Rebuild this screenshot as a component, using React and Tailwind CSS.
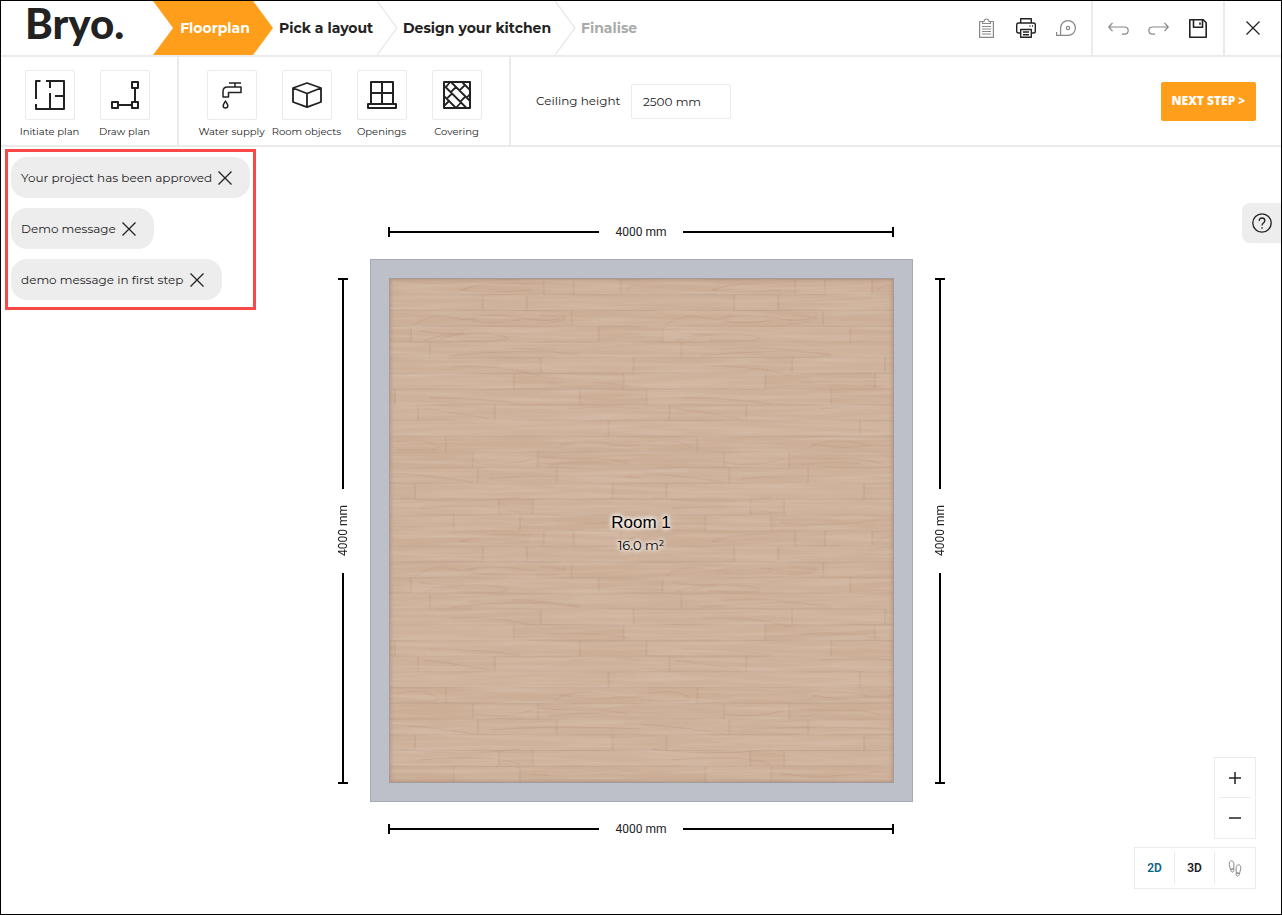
import clsx from 'clsx'

const steps = [
  { label: 'Pick a layout', width: 'w-[125px] pl-[6px]' },
  { label: 'Design your kitchen', width: 'w-[178px] pl-[5px]' },
]

const messages = [
  'Your project has been approved',
  'Demo message',
  'demo message in first step',
]

// x positions of the plank joints, one list per row of the floor pattern
const planks = [
  [154, 184, 231],
  [93, 137],
  [182],
  [21, 209],
  [40],
  [151, 244],
  [124, 234],
  [5, 190],
  [28, 105],
  [219],
  [56],
  [83, 148],
  [88, 167],
  [25, 223],
  [109, 143],
  [64, 130],
]

const TILE = 252
const ROW = TILE / planks.length
const tones = ['#cdb099', '#cfb29c', '#ccae97', '#ceb19b']

function Icon({ w, h, stroke = 1.5, className, children }) {
  return (
    <svg
      width={w}
      height={h}
      viewBox={`0 0 ${w} ${h}`}
      fill="none"
      stroke="currentColor"
      strokeWidth={stroke}
      strokeLinejoin="round"
      className={clsx('shrink-0', className)}
      aria-hidden="true"
    >
      {children}
    </svg>
  )
}

const InitiateIcon = () => (
  <Icon w={30} h={30} stroke={2}>
    <path d="M5.500 1H1v18M1 24v5h28V1H11M15 1v7M15 13v16M20 16h9" />
  </Icon>
)

const DrawIcon = () => (
  <Icon w={28} h={28} stroke={2}>
    <path d="M21 1h6v6h-6zM21 21h6v6h-6zM1 21h6v6H1zM24 7v14M7 24h14" />
  </Icon>
)

const WaterIcon = () => (
  <Icon w={20} h={27}>
    <path d="M7 1h12M13 1v4M1 15V9.500Q1 5 5.500 5H19v5.500H6.500V15z" />
    <path d="M3.500 19C2.500 21 1.200 22.300 1.200 23.700a2.300 2.300 0 0 0 4.600 0C5.800 22.300 4.500 21 3.500 19z" />
  </Icon>
)

const CubeIcon = () => (
  <Icon w={30} h={26} stroke={1.8}>
    <path d="M15 1l14 5v14l-14 5.200L1 20V6zM1 6l14 5.500L29 6M15 11.500v13.700" />
  </Icon>
)

const WindowIcon = () => (
  <Icon w={30} h={28} stroke={2}>
    <path d="M4 23V1h22v22M15 1v22M4 12h22M1 23h28v4H1z" />
  </Icon>
)

const CoveringIcon = () => (
  <Icon w={28} h={28} stroke={2}>
    <path d="M1 1h26v26H1z" />
    <path
      strokeWidth="1.800"
      d="M1 15l12 12M1 4.500L23.500 27M8 1l19 19M19 1l8 8M13 6l-5.200 5.200M22.500 15.500l-5.200 5.200M22 4l-5.200 5.200M27 13l-3 3.500M9 12.500l-5.200 5.200M18 21.500L12.800 27M6 20l-5 5M7 1L3.500 5.500"
    />
  </Icon>
)

const CloseIcon = () => (
  <Icon w={14} h={14} stroke={1.3}>
    <path d="M.5.500l13 13M13.500.500l-13 13" />
  </Icon>
)

const ClipboardIcon = () => (
  <Icon w={15} h={20} stroke={1.2}>
    <path d="M4 3.500H.600v15.900h13.800V3.500H11M3.500 5.500h8V3.500H10Q9.500 1 7.500 1T5 3.500H3.500zM3 8.500h9M3 11h9M3 13.500h9M3 16h9" />
  </Icon>
)

const PrinterIcon = () => (
  <Icon w={20} h={20} stroke={1.4}>
    <path d="M4.700 5V.700h10.600V5M4.700 15H2.500Q.700 15 .700 13.200V6.800Q.700 5 2.500 5h15q1.800 0 1.800 1.800v6.400q0 1.800-1.800 1.800h-2.200M4.700 11.500h10.600v7.800H4.700zM7 14h6M7 16.800h6M13.500 8h1M16 8h1" />
  </Icon>
)

const TapeIcon = () => (
  <Icon w={20} h={16} stroke={1.2}>
    <path d="M.600 12v3.400H12a7.400 7.400 0 1 0-7.400-7.400v7.400" />
    <circle cx="12" cy="8" r="1.700" />
  </Icon>
)

const UndoIcon = ({ className }) => (
  <Icon w={21} h={13} stroke={1.2} className={className}>
    <path d="M4.500.800L.800 5l3.700 4.200M.800 5h15.200q4.200 0 4.200 3.600T16 12.200h-2" />
  </Icon>
)

const SaveIcon = () => (
  <Icon w={18} h={19} stroke={1.6}>
    <path d="M.800.800h13.400l3 3v14.400H.800zM4.500 1v7.200h9V1M11 3.500v2.200" />
  </Icon>
)

const FeetIcon = () => (
  <Icon w={14} h={17} stroke={1}>
    <path d="M1.200 4.500C1 2 2.200.700 3.500.800 5.200.900 6 3 5.900 5L5.700 8.800 2.500 9.500zM2.500 9.500l3.200-.7c.5 2 0 3.200-1 3.300s-2-.8-2.200-2.600z" />
    <path d="M12.800 8.500c.2-2.500-1-3.800-2.300-3.700-1.700.1-2.500 2.200-2.400 4.200l.2 3.800 3.200.7zM11.500 13.500l-3.200-.7c-.5 2 0 3.200 1 3.300s2-.8 2.200-2.600z" />
  </Icon>
)

const setupTools = [
  { label: 'Initiate plan', icon: InitiateIcon },
  { label: 'Draw plan', icon: DrawIcon },
]

const objectTools = [
  { label: 'Water supply', icon: WaterIcon },
  { label: 'Room objects', icon: CubeIcon },
  { label: 'Openings', icon: WindowIcon },
  { label: 'Covering', icon: CoveringIcon },
]

function ToolGroup({ tools, className }) {
  return (
    <div className={clsx('flex border-r-2 border-[#ebebeb] pr-[15px] pt-[13px]', className)}>
      {tools.map((tool) => (
        <button key={tool.label} className="flex w-[75px] flex-col items-center">
          <span className="flex h-[50px] w-[50px] items-center justify-center rounded-xs border border-[#ebebeb]">
            <tool.icon />
          </span>
          <span className="mt-1 whitespace-nowrap text-[10px] leading-4">{tool.label}</span>
        </button>
      ))}
    </div>
  )
}

function HeaderButton({ label, muted, children }) {
  return (
    <button
      aria-label={label}
      className={clsx('flex h-full w-10 items-center justify-center', muted && 'text-[#888]')}
    >
      {children}
    </button>
  )
}

function Header() {
  return (
    <header className="flex h-14 border-b-2 border-[#ebebeb]">
      <div className="w-[152px] shrink-0 pl-6 font-['Lato'] text-[42px] font-black leading-[44px] text-[#222]">
        Bryo.
      </div>
      <nav className="flex text-[14px] font-bold">
        <button className="w-[120px] bg-[#ff9e1b] pl-1 text-white [clip-path:polygon(0_0,calc(100%-20px)_0,100%_50%,calc(100%-20px)_100%,0_100%,20px_50%)]">
          Floorplan
        </button>
        {steps.map((step) => (
          <button
            key={step.label}
            className={clsx('flex items-center justify-between whitespace-nowrap', step.width)}
          >
            {step.label}
            <Icon w={21} h={54} className="text-[#ebebeb]">
              <path d="M0 0l20 27L0 54" />
            </Icon>
          </button>
        ))}
        <button className="pl-[5px] text-[#aaa]" disabled>
          Finalise
        </button>
      </nav>
      <div className="ml-auto flex">
        <div className="flex pr-[5px]">
          <HeaderButton label="Item list" muted><ClipboardIcon /></HeaderButton>
          <HeaderButton label="Print"><PrinterIcon /></HeaderButton>
          <HeaderButton label="Measure" muted><TapeIcon /></HeaderButton>
        </div>
        <div className="flex border-x-2 border-[#ebebeb] px-[5px]">
          <HeaderButton label="Undo" muted><UndoIcon /></HeaderButton>
          <HeaderButton label="Redo" muted><UndoIcon className="-scale-x-100" /></HeaderButton>
          <HeaderButton label="Save"><SaveIcon /></HeaderButton>
        </div>
        <div className="px-2">
          <HeaderButton label="Close"><CloseIcon /></HeaderButton>
        </div>
      </div>
    </header>
  )
}

function Toolbar() {
  return (
    <div className="flex h-[90px] border-b-2 border-[#ebebeb]">
      <ToolGroup tools={setupTools} className="pl-[11px]" />
      <ToolGroup tools={objectTools} className="pl-[15px]" />
      <div className="flex flex-1 items-center pl-[25px] pr-[25px] text-[12px]">
        <label htmlFor="ceiling" className="w-[95px]">Ceiling height</label>
        <input
          id="ceiling"
          type="text"
          defaultValue="2500 mm"
          className="h-[35px] w-[100px] rounded-xs border border-[#ebebeb] px-[11px]"
        />
        <button className="ml-auto h-[39px] w-[95px] rounded-xs bg-[#ff9e1b] font-['Open_Sans'] font-extrabold text-white">
          NEXT STEP &gt;
        </button>
      </div>
    </div>
  )
}

function Messages() {
  return (
    <ul className="absolute left-1 top-[2px] flex w-[251px] flex-col items-start gap-[10px] border-3 border-[#f94848] px-[3px] pb-[7px] pt-[5px] text-[12px]">
      {messages.map((message) => (
        <li key={message} className="flex h-[41px] items-center gap-[6px] whitespace-nowrap rounded-2xl bg-[#ededed] pl-[10px] pr-[18px]">
          {message}
          <button aria-label={`Dismiss: ${message}`}><CloseIcon /></button>
        </li>
      ))}
    </ul>
  )
}

function Dimension({ vertical, className }) {
  const line = clsx('flex-1 bg-black', vertical ? 'w-[2px]' : 'h-[2px]')
  const tick = clsx('bg-black', vertical ? 'h-[2px] w-[10px]' : 'h-[10px] w-[2px]')
  return (
    <div
      className={clsx(
        "flex items-center justify-self-center self-center font-['Roboto'] text-[12px] text-[#222]",
        vertical ? 'h-[506px] w-[10px] flex-col' : 'h-[10px] w-[506px]',
        className
      )}
    >
      <div className={tick} />
      <div className={line} />
      <span
        className={clsx(
          'text-center leading-[10px]',
          vertical ? 'h-[84px] rotate-180 [writing-mode:vertical-rl]' : 'w-[84px]'
        )}
      >
        4000 mm
      </span>
      <div className={line} />
      <div className={tick} />
    </div>
  )
}

function Floor() {
  return (
    <svg viewBox="0 0 504 504" className="h-full w-full" aria-hidden="true">
      <defs>
        <filter id="grain" x="0" y="0" width="100%" height="100%">
          <feTurbulence type="fractalNoise" baseFrequency="0.012 0.25" numOctaves="3" seed="7" />
          <feColorMatrix values="0 0 0 0 0.68  0 0 0 0 0.53  0 0 0 0 0.42  1.4 0 0 0 -0.55" />
        </filter>
        <pattern id="planks" width={TILE} height={TILE} patternUnits="userSpaceOnUse">
          {planks.map((joints, row) => {
            const y = row * ROW
            const tone = (i) => tones[(row + i * 3) % tones.length]
            return (
              <g key={row}>
                {/* the last plank of a row runs on into the next tile */}
                <rect y={y} width={TILE} height={ROW} fill={tone(joints.length - 1)} />
                {joints.slice(0, -1).map((x, i) => (
                  <rect key={x} x={x} y={y} width={joints[i + 1] - x} height={ROW} fill={tone(i)} />
                ))}
                {joints.map((x) => (
                  <path key={x} d={`M${x} ${y}v${ROW}`} stroke="#b28f77" strokeWidth="0.8" opacity="0.7" />
                ))}
                <path d={`M0 ${y}h${TILE}`} stroke="#b08c73" strokeWidth="0.9" opacity="0.45" />
              </g>
            )
          })}
          {/* knots and long curved veins */}
          <g fill="none" stroke="#b7917a" strokeWidth="0.9" opacity="0.5">
            <path d="M70 11q30-10 70-6M70 11q30 4 70 0M236 11q8-6 16-5" />
            <path d="M24 46q18-12 34-8t30 2M76 40q22-7 56-1t44-3M82 42q24 4 48-1M150 36q20 2 26 3q-6 5-30 6" />
            <path d="M30 52q24 4 44 2M50 60q22-7 46-5t22 5-50 1M34 62q20-8 40-7" />
            <path d="M80 70q50-4 110 7M60 77q70-8 130-2" />
            <path d="M60 88q50-3 90 9M160 104q50-3 80 4M40 119q50 0 90 6M180 130q40-4 70 0" />
            <path d="M34 130q40 5 66 10M6 163q26-4 40 3t-40 5M165 170q20-12 50-6t36 1M170 165q30 6 60 2" />
            <path d="M84 184q30 5 60-4M150 178q30 3 50 2t40 5M160 186q30-4 60-1M0 194q50 4 84 10" />
            <path d="M100 200q60-5 150-1M10 219q60 8 120 0M30 230q70-6 100 4M140 244q40 6 100-3" />
          </g>
        </pattern>
      </defs>
      <rect width="504" height="504" fill="url(#planks)" />
      <rect width="504" height="504" filter="url(#grain)" />
    </svg>
  )
}

function Plan() {
  return (
    <div className="grid grid-cols-[10px_543px_10px] gap-[22px]">
      <Dimension className="col-start-2" />
      <Dimension vertical className="col-start-1" />
      <div className="relative h-[543px] border border-[#a5abb4] bg-[#bdc0c9] p-[18px]">
        <div className="h-full border border-[#a39c9a]">
          <Floor />
        </div>
        <div className="absolute inset-[19px] shadow-[inset_0_0_4px_rgba(120,80,60,0.4)]" />
        <div className="absolute inset-0 flex flex-col items-center justify-center pt-1 text-black [text-shadow:0_0_4px_#fff,0_0_4px_#fff,0_0_6px_#fff]">
          <span className="font-['Liberation_Sans'] text-[17px] leading-6">Room 1</span>
          <span className="text-[13px] leading-5">16.0 m²</span>
        </div>
      </div>
      <Dimension vertical />
      <Dimension className="col-start-2" />
    </div>
  )
}

function ViewControls() {
  return (
    <div className="absolute bottom-[25px] right-[25px] flex flex-col items-end gap-2 font-['Roboto'] text-[12px] font-semibold">
      <div className="flex w-[42px] flex-col divide-y divide-[#ebebeb] border border-[#ebebeb] bg-white px-1">
        <button aria-label="Zoom in" className="flex h-10 items-center justify-center">
          <Icon w={12} h={12}><path d="M0 6h12M6 0v12" /></Icon>
        </button>
        <button aria-label="Zoom out" className="flex h-10 items-center justify-center">
          <Icon w={12} h={12}><path d="M0 6h12" /></Icon>
        </button>
      </div>
      <div className="flex h-[42px] divide-x divide-[#ebebeb] border border-[#ebebeb] bg-white py-1">
        <button className="w-10 text-[#0f6480]">2D</button>
        <button className="w-10">3D</button>
        <button aria-label="Walk through" className="flex w-10 items-center justify-center text-[#888]">
          <FeetIcon />
        </button>
      </div>
    </div>
  )
}

export default function App() {
  return (
    <div className="flex min-h-screen flex-col border border-black bg-white font-['Montserrat','Inter',sans-serif] text-[#222]">
      <Header />
      <Toolbar />
      <main className="relative flex flex-1 items-center justify-center">
        <Plan />
        <Messages />
        <button aria-label="Help" className="absolute right-0 top-14 flex h-10 w-[39px] items-center justify-center rounded-l-lg bg-[#ededed]">
          <Icon w={20} h={20} stroke={1.3}>
            <circle cx="10" cy="10" r="9.200" />
            <path d="M7.200 8q0-3 2.800-3t2.800 2.500q0 1.500-1.400 2.500T10 12.500M10 14.300v1.500" />
          </Icon>
        </button>
        <ViewControls />
      </main>
    </div>
  )
}
